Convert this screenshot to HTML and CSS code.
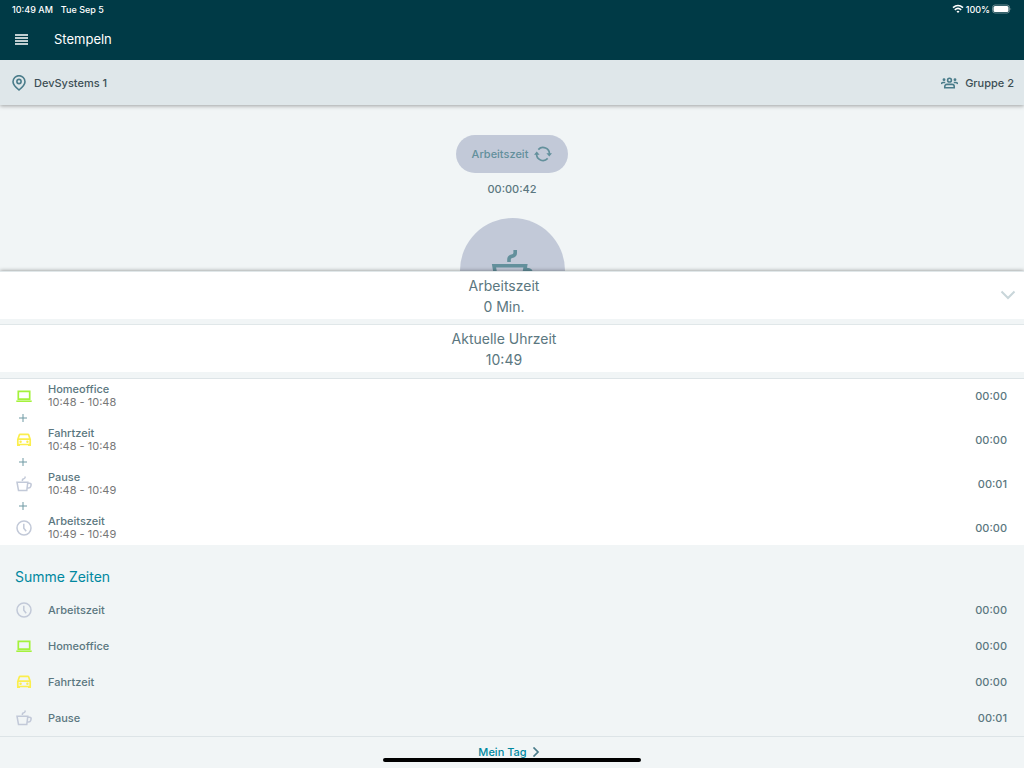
FILE: index.html
```html
<!DOCTYPE html>
<html lang="de">
<head>
    <meta charset="UTF-8">
    <meta name="viewport" content="width=device-width, initial-scale=1.0">
    <title>Stempeln</title>
    <link rel="stylesheet" href="styles.css">
</head>
<body>
    <!-- Icons -->
    <svg class="sprite" aria-hidden="true">
        <symbol id="laptop" viewBox="0 0 16 16">
            <path d="M2.3 3.3h11.4v7.9H2.300z" fill="none" stroke="currentColor" stroke-width="1.7"/>
            <path d="M.3 12.400h15.400v1.600H.3z" fill="currentColor"/>
        </symbol>
        <symbol id="car" viewBox="0 0 16 16">
            <path d="M1.800 7.500 3.300 3Q3.500 2.400 4.200 2.400h7.600q.7 0 .9.6l1.500 4.500v5H1.800zM1.800 7.200h12.400" fill="none" stroke="currentColor" stroke-width="1.700"/>
            <path d="M1 12h3v2H1zM12 12h3v2h-3z" fill="currentColor"/>
            <circle cx="4.600" cy="9.800" r="1.200" fill="currentColor"/>
            <circle cx="11.400" cy="9.800" r="1.200" fill="currentColor"/>
        </symbol>
        <symbol id="cup" viewBox="0 0 16 16">
            <path d="M1 6.200h10.800l-1 8.200H2.500zM11.600 7.200h2q1.800 0 1.500 1.800l-.4 1.500q-.4 1.500-2.200 1.500h-1.300M6.400 5V3.900q0-.8.9-1 1.700-.3 1.800-1.400V.5" fill="none" stroke="currentColor" stroke-width="1.500"/>
        </symbol>
        <symbol id="clock" viewBox="0 0 16 16">
            <circle cx="8" cy="8" r="7" fill="none" stroke="currentColor" stroke-width="1.500"/>
            <path d="M7.800 3.800v4.400l2.400 3" fill="none" stroke="currentColor" stroke-width="1.500"/>
        </symbol>
    </svg>

    <header class="header">
        <div class="status">
            <span>10:49 AM</span>
            <span>Tue Sep 5</span>
            <span class="status-right">
                <svg width="12" height="10" viewBox="0 0 12 10" fill="none" stroke="#fff" stroke-width="1.600">
                    <path d="M1 3.700q5-4.400 10 0M2.800 5.800q3.200-2.800 6.400 0"/>
                    <path d="M6 9 4.500 7.400q1.500-1.200 3 0z" fill="#fff" stroke="none"/>
                </svg>
                100%
                <svg width="20" height="10" viewBox="0 0 20 10">
                    <rect x=".5" y="1" width="17" height="8" rx="2.500" fill="none" stroke="#6b8a91"/>
                    <rect x="1.500" y="2" width="15" height="6" rx="1.500" fill="#fff"/>
                    <path d="M18.500 3.700q1.500 1.300 0 2.600z" fill="#6b8a91"/>
                </svg>
            </span>
        </div>
        <div class="toolbar">
            <button class="menu" aria-label="Menü">
                <svg width="13" height="11" viewBox="0 0 13 11" stroke="#fff" stroke-width="1.500">
                    <path d="M0 1h13M0 4h13M0 7h13M0 10h13"/>
                </svg>
            </button>
            <h1>Stempeln</h1>
        </div>
    </header>

    <div class="place">
        <svg width="14" height="16" viewBox="0 0 14 16" fill="none" stroke="#4a7c8a" stroke-width="1.600">
            <path d="M7 15Q1 10 1 6.700a6 6 0 0 1 12 0Q13 10 7 15z"/>
            <circle cx="7" cy="6.500" r="2.100"/>
        </svg>
        <span>DevSystems 1</span>
        <span class="group">
            <svg width="17" height="12" viewBox="0 0 18 12" fill="none" stroke="#4a7c8a" stroke-width="1.700">
                <circle cx="9" cy="3" r="2"/>
                <path d="M4 11V9.800q0-2.300 2.300-2.300h5.400q2.300 0 2.300 2.300V11zM.3 7.200q.4-1.700 2-1.700h2.200M17.700 7.200q-.4-1.700-2-1.700h-2.200"/>
                <circle cx="3.200" cy="2.500" r="1.500" fill="#4a7c8a" stroke="none"/>
                <circle cx="14.800" cy="2.500" r="1.500" fill="#4a7c8a" stroke="none"/>
            </svg>
            Gruppe 2
        </span>
    </div>

    <main class="stage">
        <button class="pill">
            Arbeitszeit
            <svg width="18" height="16" viewBox="0 0 18 16" fill="none" stroke="#63909c" stroke-width="1.700">
                <path d="M4.300 3.600a6.400 6.400 0 0 1 11.100 4.800M13.700 12.400A6.400 6.400 0 0 1 2.600 7.600"/>
                <path d="M12.400 7.200h5.600l-2.700 3.300zM0 8.800h5.600L2.700 5.500z" fill="#63909c" stroke="none"/>
            </svg>
        </button>
        <div class="timer">00:00:42</div>
        <button class="round" aria-label="Pause">
            <svg width="42" height="42" viewBox="0 0 42 42" fill="none" stroke="#63909c" stroke-width="3.600">
                <path d="M3 15.700h31.500l-4 23H7zM33 19.500h3q4.500 0 3.700 4l-1 3.500q-1 4-5 4h-2"/>
                <path d="M18 12V9.500q0-2.500 2.800-3.200 3.400-.8 3.400-3.300V0"/>
            </svg>
        </button>
    </main>

    <section class="sheet">
        <div class="card">
            <div>Arbeitszeit</div>
            <div>0 Min.</div>
            <button class="toggle" aria-label="Einklappen">
                <svg width="16" height="10" viewBox="0 0 16 10" fill="none" stroke="#c9d6da" stroke-width="2">
                    <path d="m1.500 1.500 6.500 6.500 6.500-6.500"/>
                </svg>
            </button>
        </div>
        <div class="card">
            <div>Aktuelle Uhrzeit</div>
            <div>10:49</div>
        </div>

        <ul class="entries">
            <li class="row">
                <svg class="icon green"><use href="#laptop"/></svg>
                <div><div class="name">Homeoffice</div><div class="span">10:48 - 10:48</div></div>
                <span class="time">00:00</span>
            </li>
            <li class="plus"><svg width="8" height="8"><path d="M4 0v8M0 4h8"/></svg></li>
            <li class="row">
                <svg class="icon yellow"><use href="#car"/></svg>
                <div><div class="name">Fahrtzeit</div><div class="span">10:48 - 10:48</div></div>
                <span class="time">00:00</span>
            </li>
            <li class="plus"><svg width="8" height="8"><path d="M4 0v8M0 4h8"/></svg></li>
            <li class="row">
                <svg class="icon"><use href="#cup"/></svg>
                <div><div class="name">Pause</div><div class="span">10:48 - 10:49</div></div>
                <span class="time">00:01</span>
            </li>
            <li class="plus"><svg width="8" height="8"><path d="M4 0v8M0 4h8"/></svg></li>
            <li class="row">
                <svg class="icon"><use href="#clock"/></svg>
                <div><div class="name">Arbeitszeit</div><div class="span">10:49 - 10:49</div></div>
                <span class="time">00:00</span>
            </li>
        </ul>

        <div class="sums">
            <h2>Summe Zeiten</h2>
            <ul>
                <li class="row">
                    <svg class="icon"><use href="#clock"/></svg>
                    <span class="name">Arbeitszeit</span>
                    <span class="time">00:00</span>
                </li>
                <li class="row">
                    <svg class="icon green"><use href="#laptop"/></svg>
                    <span class="name">Homeoffice</span>
                    <span class="time">00:00</span>
                </li>
                <li class="row">
                    <svg class="icon yellow"><use href="#car"/></svg>
                    <span class="name">Fahrtzeit</span>
                    <span class="time">00:00</span>
                </li>
                <li class="row">
                    <svg class="icon"><use href="#cup"/></svg>
                    <span class="name">Pause</span>
                    <span class="time">00:01</span>
                </li>
            </ul>
        </div>
    </section>

    <footer class="footer">
        <a href="#">
            Mein Tag
            <svg width="8" height="10" viewBox="0 0 8 10" fill="none" stroke="#4a7c8a" stroke-width="1.700">
                <path d="m1.500.5 4.500 4.500-4.500 4.500"/>
            </svg>
        </a>
        <div class="home-bar"></div>
    </footer>
</body>
</html>
```
FILE: styles.css
```css
* {
    box-sizing: border-box;
}
body {
    margin: 0;
    height: 100vh;
    display: flex;
    flex-direction: column;
    overflow: hidden;
    font-family: Inter, "Liberation Sans", sans-serif;
    font-size: 11px;
    font-weight: 500;
    color: #5b7780;
    background: #f1f5f6;
}
button {
    border: none;
    padding: 0;
    background: none;
    font: inherit;
    color: inherit;
    cursor: pointer;
}
svg {
    display: block;
    flex-shrink: 0;
}
ul {
    list-style: none;
    margin: 0;
    padding: 0;
}
.sprite {
    position: absolute;
    width: 0;
    height: 0;
}

/* header */
.header {
    position: relative;
    z-index: 2;
    background: #003a46;
    color: white;
}
.status {
    display: flex;
    gap: 8px;
    height: 18px;
    padding: 0 12px;
    align-items: center;
    font-size: 9px;
}
.status-right {
    display: flex;
    align-items: center;
    gap: 2px;
    margin-left: auto;
}
.toolbar {
    display: flex;
    align-items: center;
    gap: 26px;
    height: 42px;
    padding: 0 15px;
}
.toolbar h1 {
    margin: 0;
    font-size: 13px;
    font-weight: 400;
}
.place {
    position: relative;
    z-index: 1;
    display: flex;
    align-items: center;
    gap: 8px;
    height: 45px;
    padding: 0 10px 0 12px;
    background: #dfe7ea;
    color: #3d4f55;
    box-shadow: 0 1px 4px rgba(0, 0, 0, 0.35);
}
.group {
    display: flex;
    align-items: center;
    gap: 7px;
    margin-left: auto;
}

/* stamp buttons */
.stage {
    flex: 1;
    min-height: 0;
    overflow: hidden;
    display: flex;
    flex-direction: column;
    align-items: center;
    padding-top: 30px;
}
.pill {
    display: flex;
    flex-shrink: 0;
    align-items: center;
    gap: 6px;
    height: 38px;
    padding: 0 16px;
    border-radius: 19px;
    background: #c2c9d8;
    color: #63909c;
}
.timer {
    margin: 8px 0 21px;
    line-height: 16px;
}
.round {
    display: flex;
    flex-shrink: 0;
    align-items: center;
    justify-content: center;
    width: 105px;
    height: 105px;
    border-radius: 50%;
    background: #c2c9d8;
}

/* bottom sheet */
.sheet {
    position: relative;
    background: #f1f5f6;
    box-shadow: 0 -1px 4px rgba(0, 0, 0, 0.45);
}
.card {
    position: relative;
    height: 47px;
    margin-bottom: 6px;
    padding: 3px 16px 0 0;
    background: white;
    font-size: 14px;
    font-weight: 400;
    line-height: 21px;
    text-align: center;
    box-shadow: 0 -1px 0 #e0e7e9;
}
.toggle {
    position: absolute;
    top: 18px;
    right: 8px;
}
.entries {
    padding: 4px 0;
    background: white;
    border-top: 1px solid #dde4e7;
}
.row {
    display: flex;
    align-items: center;
    gap: 16px;
    padding: 0 17px 0 16px;
    line-height: 13px;
}
.icon {
    width: 16px;
    height: 16px;
    color: #c2c9d8;
}
.green {
    color: #a4f23c;
}
.yellow {
    color: #fbee4d;
}
.span {
    color: #777;
    font-weight: 400;
}
.time {
    margin-left: auto;
}
.plus {
    display: flex;
    align-items: center;
    height: 18px;
    padding-left: 19px;
    stroke: #6f99a3;
}
.sums h2 {
    margin: 0;
    padding: 21px 15px 5px;
    font-size: 14px;
    font-weight: 400;
    line-height: 21px;
    color: #0088a0;
}
.sums .row {
    height: 36px;
}

/* footer */
.footer {
    position: relative;
    display: flex;
    flex-direction: column;
    align-items: center;
    height: 32px;
    padding-top: 7px;
    border-top: 1px solid #dde4e7;
    background: #f1f5f6;
}
.footer a {
    display: flex;
    align-items: center;
    gap: 5px;
    margin-right: 6px;
    line-height: 16px;
    color: #0088a0;
    text-decoration: none;
}
.home-bar {
    position: absolute;
    bottom: 6px;
    width: 258px;
    height: 4px;
    border-radius: 2px;
    background: black;
}
```
